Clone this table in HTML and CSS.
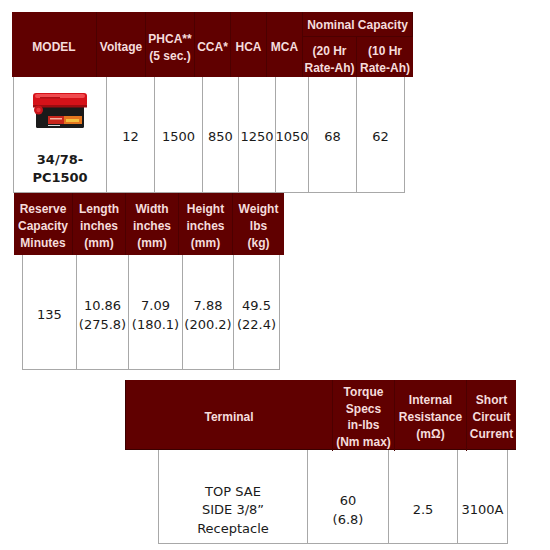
FILE: index.html
```html
<!DOCTYPE html>
<html>
<head>
<meta charset="utf-8">
<link rel="stylesheet" href="styles.css">
</head>
<body>
<div class="sheet">
  <section class="spec spec-main">
    <div class="head head-main">
      <div class="hc span-r">MODEL</div>
      <div class="hc span-r">Voltage</div>
      <div class="hc span-r">PHCA**<br>(5 sec.)</div>
      <div class="hc span-r">CCA*</div>
      <div class="hc span-r">HCA</div>
      <div class="hc span-r">MCA</div>
      <div class="hc span-c nominal">Nominal Capacity</div>
      <div class="hc">(20 Hr<br>Rate-Ah)</div>
      <div class="hc last">(10 Hr<br>Rate-Ah)</div>
    </div>
    <div class="body body-main">
      <div class="bc model">
        <svg class="battery" width="56" height="38" viewBox="0 0 56 38">
          <rect x="4" y="12" width="48" height="24" rx="1.5" fill="#1b1a1a"/>
          <rect x="1" y="1" width="54" height="14" rx="3" fill="#d51219"/>
          <rect x="3" y="2" width="50" height="4" rx="2" fill="#f04a4e"/>
          <rect x="8" y="5" width="20" height="1.5" fill="#b01016"/>
          <rect x="1" y="13" width="54" height="2.5" fill="#9c0c10"/>
          <circle cx="6.5" cy="18" r="4.5" fill="#c8141a"/>
          <circle cx="6.5" cy="18" r="2.2" fill="#e8383c"/>
          <rect x="16" y="24" width="34" height="8" fill="#e4761f"/>
          <rect x="16" y="24" width="16" height="8" fill="#c8261c"/>
          <rect x="18" y="26" width="12" height="1.5" fill="#f5b0a0"/>
          <rect x="34" y="27" width="13" height="3" fill="#f4c040"/>
          <rect x="16" y="33" width="12" height="1" fill="#d9d9d9"/>
        </svg>
        <div class="model-name">34/78-<br>PC1500</div>
      </div>
      <div class="bc">12</div>
      <div class="bc">1500</div>
      <div class="bc">850</div>
      <div class="bc">1250</div>
      <div class="bc">1050</div>
      <div class="bc">68</div>
      <div class="bc last">62</div>
    </div>
  </section>

  <section class="spec spec-dims">
    <div class="head head-dims">
      <div class="hc">Reserve<br>Capacity<br>Minutes</div>
      <div class="hc">Length<br>inches<br>(mm)</div>
      <div class="hc">Width<br>inches<br>(mm)</div>
      <div class="hc">Height<br>inches<br>(mm)</div>
      <div class="hc last">Weight<br>lbs<br>(kg)</div>
    </div>
    <div class="body body-dims">
      <div class="bc">135</div>
      <div class="bc">10.86<br>(275.8)</div>
      <div class="bc">7.09<br>(180.1)</div>
      <div class="bc">7.88<br>(200.2)</div>
      <div class="bc last">49.5<br>(22.4)</div>
    </div>
  </section>

  <section class="spec spec-term">
    <div class="head head-term">
      <div class="hc">Terminal</div>
      <div class="hc">Torque<br>Specs<br>in-lbs<br>(Nm max)</div>
      <div class="hc">Internal<br>Resistance<br>(mΩ)</div>
      <div class="hc last">Short<br>Circuit<br>Current</div>
    </div>
    <div class="body body-term">
      <div class="bc">TOP SAE<br>SIDE 3/8”<br>Receptacle</div>
      <div class="bc">60<br>(6.8)</div>
      <div class="bc">2.5</div>
      <div class="bc last">3100A</div>
    </div>
  </section>
</div>
</body>
</html>
```
FILE: styles.css
```css
* { box-sizing: border-box; }

html, body {
  margin: 0;
  padding: 0;
  background: #ffffff;
}

.sheet {
  display: flex;
  flex-direction: column;
  align-items: flex-start;
  padding-top: 12px;
}

.spec {
  display: flex;
  flex-direction: column;
  align-items: flex-start;
}

.head {
  display: grid;
  background: #600000;
  font-family: "Liberation Sans", Arial, sans-serif;
  font-weight: bold;
  font-size: 12px;
  line-height: 16.7px;
  color: #f5dcdc;
}

.hc {
  display: flex;
  align-items: center;
  justify-content: center;
  text-align: center;
  white-space: nowrap;
  padding-top: 6px;
  border-right: 1px solid #4c0000;
}

.hc.last { border-right: none; }

.span-r { grid-row: span 2; }
.span-c { grid-column: span 2; }
.nominal {
  padding-top: 3px;
  border-bottom: 1px solid #4c0000;
}

.body {
  display: grid;
  font-family: "DejaVu Sans", Verdana, sans-serif;
  font-size: 13px;
  line-height: 18.5px;
  color: #1a1a1a;
  border-bottom: 1px solid #a8a8a8;
}

.bc {
  display: flex;
  align-items: center;
  justify-content: center;
  text-align: center;
  white-space: nowrap;
  border-left: 1px solid #a8a8a8;
}

.bc.last { border-right: 1px solid #a8a8a8; }

/* table 1 */
.spec-main { margin-left: 12px; }
.head-main {
  grid-template-columns: 85px 49px 49px 36px 36px 36px 54px 56px;
  grid-template-rows: 25px 40px;
}
.body-main {
  margin-left: 1px;
  grid-template-columns: 93px 48px 48px 36px 37px 33px 48px 49px;
  height: 116px;
}
.body-main .bc { padding-top: 5px; }

.model.bc {
  flex-direction: column;
  justify-content: flex-start;
  padding-top: 15px;
}
.battery { display: block; margin-left: 0; }
.model-name {
  font-weight: bold;
  margin-top: 21px;
  line-height: 18px;
}

/* table 2 */
.spec-dims { margin-left: 14px; }
.head-dims {
  grid-template-columns: 59px 53px 53px 54px 51px;
  height: 62px;
}
.head-dims .hc { padding-top: 5px; }
.body-dims {
  margin-left: 8px;
  grid-template-columns: 54px 52px 54px 51px 47px;
  height: 115px;
}
.body-dims .bc { padding-top: 7px; }

/* table 3 */
.spec-term {
  margin-left: 125px;
  margin-top: 10px;
}
.head-term {
  grid-template-columns: 207px 62px 72px 49px;
  height: 70px;
  border-left: 1px solid #3a0000;
  border-bottom: 1px solid #3a0000;
}
.head-term .hc { padding-top: 4px; }
.body-term {
  margin-left: 33px;
  grid-template-columns: 149px 81px 69px 51px;
  height: 94px;
}
.body-term .bc { padding-top: 28px; }
```
